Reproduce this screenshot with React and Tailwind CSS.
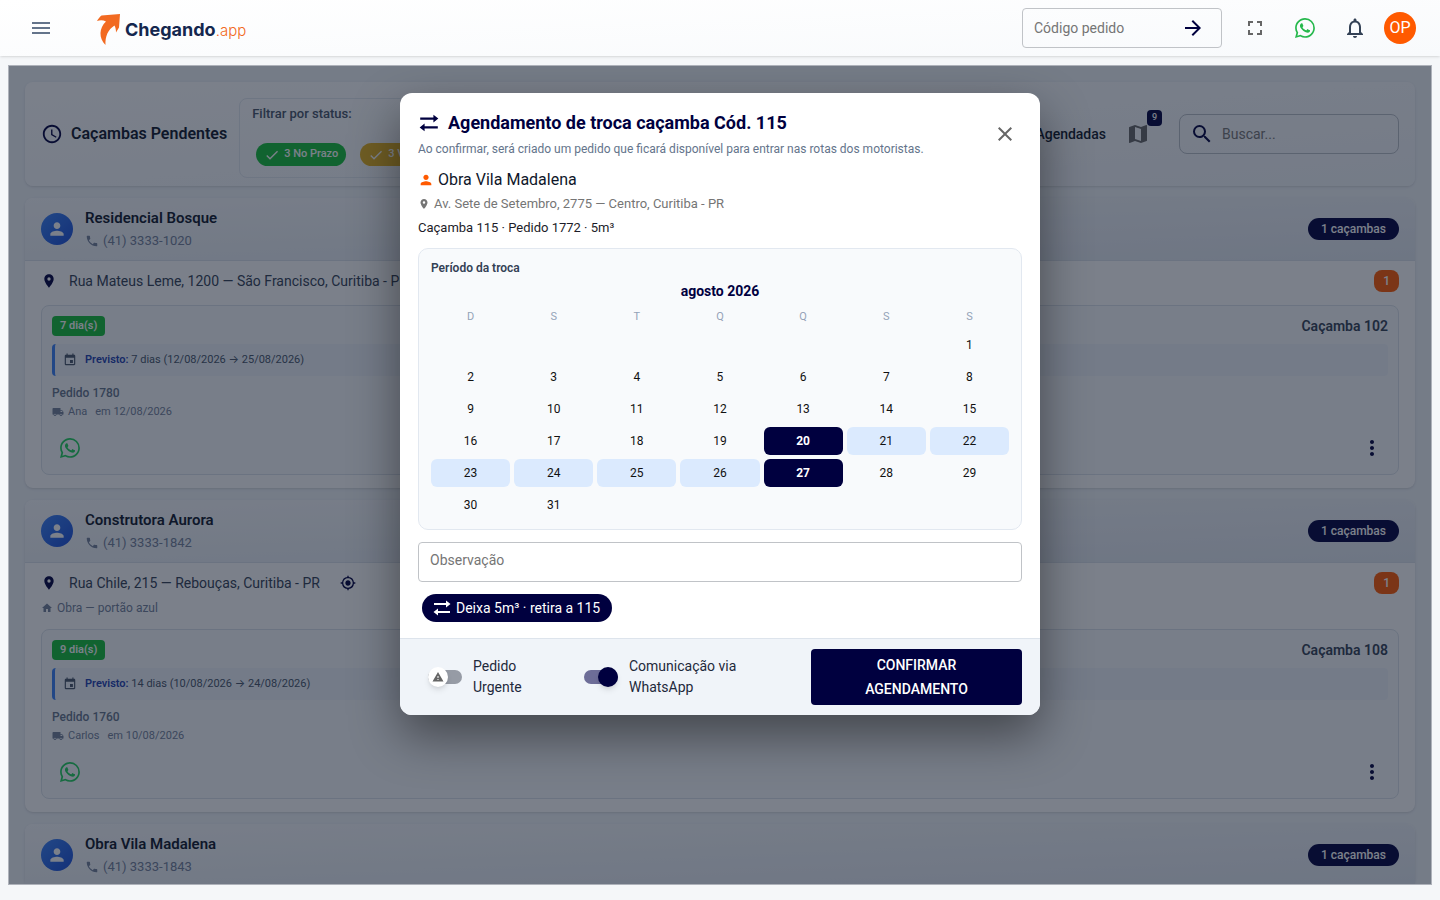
import { useState } from 'react';
import {
  MdMenu, MdArrowForward, MdFullscreen, MdNotificationsNone, MdOutlineAccessTime, MdCheck, MdMap,
  MdSearch, MdPerson, MdPhone, MdLocationOn, MdMyLocation, MdHome, MdEvent, MdLocalShipping,
  MdMoreVert, MdClose, MdWarning,
} from 'react-icons/md';
import { BsWhatsapp } from 'react-icons/bs';

const clients = [
  {
    name: 'Residencial Bosque',
    phone: '(41) 3333-1020',
    address: 'Rua Mateus Leme, 1200 — São Francisco, Curitiba - PR',
    days: '7 dia(s)',
    bucket: 'Caçamba 102',
    expected: ['7 dias (12/08/2026', '25/08/2026)'],
    order: 'Pedido 1780',
    driver: 'Ana',
    date: 'em 12/08/2026',
  },
  {
    name: 'Construtora Aurora',
    phone: '(41) 3333-1842',
    address: 'Rua Chile, 215 — Rebouças, Curitiba - PR',
    note: 'Obra — portão azul',
    days: '9 dia(s)',
    bucket: 'Caçamba 108',
    expected: ['14 dias (10/08/2026', '24/08/2026)'],
    order: 'Pedido 1760',
    driver: 'Carlos',
    date: 'em 10/08/2026',
  },
  {
    name: 'Obra Vila Madalena',
    phone: '(41) 3333-1843',
  },
];

const weekDays = ['D', 'S', 'T', 'Q', 'Q', 'S', 'S'];

function SwapIcon({ className }) {
  return (
    <svg viewBox="0 0 20 20" className={className} fill="none" stroke="currentColor" strokeWidth="2" aria-hidden="true">
      <path d="M2 6h13M18 14H5" />
      <path d="M14 2.5l4.5 3.5-4.5 3.5zM6 10.5l-4.5 3.5 4.5 3.5z" fill="currentColor" stroke="none" />
    </svg>
  );
}

function Logo() {
  return (
    <a href="#inicio" className="flex items-center gap-1">
      <svg viewBox="0 0 24 32" className="mt-0.5 h-8 w-6" aria-hidden="true">
        <path
          d="M0 8C1 6 3 3.5 4.5 2.5L23 1 22 14.5 19 19.5C19 16.500 18.500 14.500 17.500 12.500 11 16.500 8 23.500 8.500 32 1.500 25 2 15 9 8.500 6 7 3 7 0 8Z"
          fill="#f26a21"
        />
      </svg>
      <span className="mt-1 font-[Inter] text-lg leading-6 font-bold text-[#14274e]">
        Chegando<span className="text-[15px] font-light text-[#f26a21]">.app</span>
      </span>
    </a>
  );
}

function TopBar() {
  return (
    <header className="flex h-14 shrink-0 items-center bg-linear-to-br from-white to-[#f8fafc] pr-6 pl-[29px] shadow-sm">
      <button aria-label="Menu" className="mr-11 text-[#64748b]">
        <MdMenu size={24} />
      </button>
      <Logo />
      <div className="ml-auto flex h-10 w-50 items-center rounded border border-[#c0c3c7] pr-4 pl-[11px]">
        <input aria-label="Código pedido" placeholder="Código pedido" className="min-w-0 flex-1 text-sm outline-none placeholder:text-[#757575]" />
        <button aria-label="Buscar pedido" className="text-[#00003f]">
          <MdArrowForward size={24} />
        </button>
      </div>
      <button aria-label="Tela cheia" className="ml-[21px] text-[#666]">
        <MdFullscreen size={24} />
      </button>
      <button aria-label="WhatsApp" className="ml-7 text-[#25b84c]">
        <BsWhatsapp size={20} />
      </button>
      <button aria-label="Notificações" className="ml-7 text-[#334155]">
        <MdNotificationsNone size={24} />
      </button>
      <button className="ml-[17px] size-8 rounded-full bg-[#ff5a00] text-base text-white">OP</button>
    </header>
  );
}

function FilterBar() {
  return (
    <section className="flex items-center rounded-lg bg-linear-to-br from-white to-[#f1f5f9] px-4 py-2 shadow-sm">
      <MdOutlineAccessTime size={22} className="text-[#00003f]" />
      <h1 className="ml-2 text-base font-semibold text-[#0f172a]">Caçambas Pendentes</h1>
      <div className="mt-2 ml-3 h-20 rounded-lg border border-[#e2e8f0] px-3 pt-1.5">
        <p className="text-[13px] leading-[18px] font-medium text-[#475569]">Filtrar por status:</p>
        <div className="mt-5 ml-1 flex gap-3.5 text-[11px] font-medium text-white">
          <button className="flex h-[23px] items-center gap-1 rounded-full bg-[#15bf38] px-2">
            <MdCheck size={16} />3 No Prazo
          </button>
          <button className="flex h-[23px] items-center gap-1 rounded-full bg-[#e5b11d] px-2">
            <MdCheck size={16} />3 Vencendo
          </button>
        </div>
      </div>
      <span className="ml-auto text-sm font-medium text-[#0f172a]">Agendadas</span>
      <button aria-label="Mapa" className="relative ml-5 text-[#666]">
        <MdMap size={24} />
        <span className="absolute -top-3 -right-3 flex h-4 w-[15px] items-center justify-center rounded-sm bg-[#00003f] text-[9px] font-medium text-white">9</span>
      </button>
      <label className="ml-[29px] flex h-10 w-55 items-center gap-2 rounded-lg border border-[#b9bec6] px-2.5">
        <MdSearch size={24} className="text-[#00003f]" />
        <input placeholder="Buscar..." aria-label="Buscar" className="min-w-0 flex-1 text-sm outline-none placeholder:text-[#757575]" />
      </label>
    </section>
  );
}

function ClientCard({ client }) {
  return (
    <article className="rounded-lg bg-white shadow-sm">
      <div className="flex items-center rounded-t-lg border-b border-[#dbe2ea] bg-linear-to-br from-[#f8fafc] to-[#e2e8f0] px-4 py-2">
        <span className="flex size-8 items-center justify-center rounded-full bg-linear-to-br from-[#3b82f6] to-[#1d4ed8] text-white">
          <MdPerson size={20} />
        </span>
        <div className="ml-3">
          <h2 className="text-[15px] leading-6 font-semibold text-[#0f172a]">{client.name}</h2>
          <p className="flex items-center gap-1 text-[13px] leading-[22px] text-[#73819a]">
            <MdPhone size={14} />
            {client.phone}
          </p>
        </div>
        <span className="ml-auto rounded-full bg-[#00003f] px-[13px] text-xs leading-[22px] font-medium text-white">1 caçambas</span>
      </div>

      {client.address && (
        <div className="px-4 pt-2 pb-[13px]">
          <div className="flex h-6 items-center">
            <MdLocationOn size={16} className="text-[#00003f]" />
            <span className="ml-3 text-sm text-[#334155]">{client.address}</span>
            {client.note && (
              <button aria-label="Localizar" className="ml-5 text-[#00003f]">
                <MdMyLocation size={16} />
              </button>
            )}
            <span className="ml-auto rounded-lg bg-[#ff5a00] px-[9px] text-xs leading-[22px] font-medium text-white">1</span>
          </div>
          {client.note && (
            <p className="mt-1 flex items-center gap-1 text-xs leading-[18px] text-[#73819a]">
              <MdHome size={12} />
              {client.note}
            </p>
          )}

          <div className="mt-3 rounded-lg border border-[#dce3eb] bg-[#f8fafc] px-2.5 pt-2.5 pb-2">
            <div className="flex h-5 items-center justify-between">
              <span className="rounded bg-[#15bf38] px-2 text-[11px] leading-5 font-semibold text-white">{client.days}</span>
              <span className="text-sm font-semibold text-[#334155]">{client.bucket}</span>
            </div>
            <div className="mt-2 flex h-8 items-center rounded border-l-[3px] border-[#3b82f6] bg-[#eff4fb] pl-2 text-[11px] text-[#475569]">
              <MdEvent size={14} />
              <p className="ml-2">
                <strong className="font-semibold text-[#1e40af]">Previsto:</strong> {client.expected[0]}{' '}
                <span className="font-[Inter]">→</span> {client.expected[1]}
              </p>
            </div>
            <p className="mt-2 text-xs leading-[18px] font-medium text-[#64748b]">{client.order}</p>
            <p className="flex items-center text-[11px] leading-5 text-[#73819a]">
              <MdLocalShipping size={12} className="mr-1" />
              {client.driver}
              <span className="ml-2">{client.date}</span>
            </p>
            <div className="mt-2 flex h-9 items-center justify-between px-2">
              <button aria-label="WhatsApp" className="text-[#1fd05c]">
                <BsWhatsapp size={20} />
              </button>
              <button aria-label="Mais opções" className="-mr-1 text-[#00003f]">
                <MdMoreVert size={24} />
              </button>
            </div>
          </div>
        </div>
      )}
    </article>
  );
}

function Calendar() {
  const [range] = useState({ start: 20, end: 27 });
  // agosto de 2026 começa num sábado
  const cells = [...Array(6).fill(null), ...Array.from({ length: 31 }, (_, i) => i + 1)];

  const dayStyle = (day) => {
    if (day === range.start || day === range.end) return 'bg-[#00003f] font-bold text-white';
    if (day > range.start && day < range.end) return 'bg-[#dbeafe] text-[#111]';
    return 'text-[#111]';
  };

  return (
    <section className="mt-2 rounded-[10px] border border-[#e2e8f0] bg-[#f8fafc] px-3 py-2.5">
      <h3 className="text-xs leading-[18px] font-semibold text-[#334155]">Período da troca</h3>
      <p className="mt-0.5 text-center text-sm leading-6 font-bold text-[#00003f]">agosto 2026</p>
      <div className="mt-1 grid grid-cols-7 gap-1 text-center">
        {weekDays.map((d, i) => (
          <span key={i} className="text-[11px] leading-5 text-[#94a3b8]">{d}</span>
        ))}
        {cells.map((day, i) =>
          day ? (
            <button key={i} className={`h-7 rounded-md text-xs ${dayStyle(day)}`}>
              {day}
            </button>
          ) : (
            <span key={i} />
          )
        )}
      </div>
    </section>
  );
}

function Switch({ label, defaultChecked, className, icon }) {
  return (
    <label className={`flex items-center gap-[11px] text-sm leading-[21px] text-[#1e293b] ${className}`}>
      <span className="relative flex shrink-0 items-center">
        <input
          type="checkbox"
          role="switch"
          defaultChecked={defaultChecked}
          className="peer h-3.5 w-[34px] appearance-none rounded-full bg-[#969ba5] checked:bg-[#6d6d98]"
        />
        <span className="absolute left-0 flex size-5 items-center justify-center rounded-full bg-white text-[#666] shadow-md peer-checked:right-0 peer-checked:left-auto peer-checked:bg-[#00003f]">
          {icon}
        </span>
      </span>
      {label}
    </label>
  );
}

function ScheduleModal() {
  return (
    <div role="dialog" aria-labelledby="modal-title" className="w-full max-w-160 overflow-hidden rounded-xl bg-white shadow-[0_20px_50px_rgba(0,0,0,0.45)]">
      <div className="px-[18px] py-4">
        <div className="flex items-center justify-between">
          <div>
            <h2 id="modal-title" className="flex items-center gap-2 text-lg leading-7 font-bold text-[#00003f]">
              <SwapIcon className="size-[22px]" />
              Agendamento de troca caçamba Cód. 115
            </h2>
            <p className="text-xs leading-6 text-[#64748b]">
              Ao confirmar, será criado um pedido que ficará disponível para entrar nas rotas dos motoristas.
            </p>
          </div>
          <button aria-label="Fechar" className="mr-[5px] mb-0.5 text-[#666]">
            <MdClose size={24} />
          </button>
        </div>

        <p className="mt-[7px] flex items-center gap-1 text-base leading-6 text-[#0f172a]">
          <MdPerson size={16} className="text-[#ff5a00]" />
          Obra Vila Madalena
        </p>
        <p className="flex items-center gap-1 text-[13px] leading-6 text-[#757575]">
          <MdLocationOn size={12} />
          Av. Sete de Setembro, 2775 — Centro, Curitiba - PR
        </p>
        <p className="text-[13px] leading-6 text-[#1c1c28]">Caçamba 115 · Pedido 1772 · 5m³</p>

        <Calendar />

        <textarea
          rows={1}
          aria-label="Observação"
          placeholder="Observação"
          className="mt-3 block h-10 w-full resize-none rounded border border-[#c0c3c7] px-[11px] py-[7px] text-sm leading-[21px] outline-none placeholder:text-[#757575]"
        />
        <span className="mt-3 ml-1 inline-flex h-7 items-center gap-1 rounded-full bg-[#00003f] pr-3 pl-2.5 align-top text-sm text-white">
          <SwapIcon className="size-5" />
          Deixa 5m³ · retira a 115
        </span>
      </div>

      <div className="flex items-center border-t border-[#dde4ec] bg-[#f0f4f9] px-[18px] py-2.5">
        <Switch label="Pedido Urgente" className="ml-2.5 w-[120px]" icon={<MdWarning size={12} />} />
        <Switch label="Comunicação via WhatsApp" className="ml-9 w-[170px]" defaultChecked />
        <button className="ml-auto w-[211px] rounded bg-[#00003f] px-10 py-1 text-sm leading-6 font-medium text-white">
          CONFIRMAR AGENDAMENTO
        </button>
      </div>
    </div>
  );
}

export default function App() {
  return (
    <div className="flex h-screen flex-col bg-[#f5f7f9] font-[Roboto,sans-serif]">
      <TopBar />
      <main className="relative mx-2 mt-[9px] mb-[15px] min-h-0 flex-1 overflow-hidden border border-[#aeb2ba] bg-[#f1f5f9]">
        <div className="flex flex-col gap-3 p-4">
          <FilterBar />
          {clients.map((client) => (
            <ClientCard key={client.name} client={client} />
          ))}
        </div>
        <div className="absolute inset-0 flex items-start justify-center bg-[#0f172a]/55 pt-[27px]">
          <ScheduleModal />
        </div>
      </main>
    </div>
  );
}
